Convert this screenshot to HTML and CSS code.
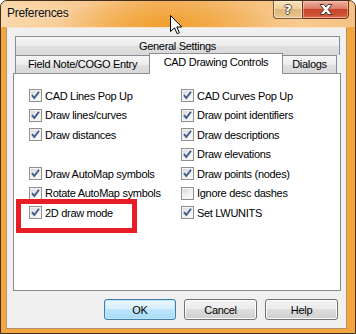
FILE: index.html
```html
<!DOCTYPE html>
<html>
<head>
<meta charset="utf-8">
<title>Preferences</title>
<link rel="stylesheet" href="styles.css">
</head>
<body>
<div class="window">
  <div class="titlebar">
    <span class="title">Preferences</span>
    <div class="caption-buttons">
      <div class="cap-btn help-btn"><span>?</span></div>
      <div class="cap-btn close-btn">
        <svg width="14" height="11" viewBox="0 0 14 11"><path d="M1 0.5 H5 L7 3 L9 0.5 H13 L9.2 5.5 L13 10.5 H9 L7 8 L5 10.5 H1 L4.8 5.5 Z" fill="#fff" stroke="#4a3b33" stroke-width="1"/></svg>
      </div>
    </div>
  </div>

  <div class="client">
    <div class="tabs">
      <div class="tab-row back">
        <div class="tab wide">General Settings</div>
      </div>
      <div class="tab-row front">
        <div class="tab field">Field Note/COGO Entry</div>
        <div class="tab cad selected">CAD Drawing Controls</div>
        <div class="tab dialogs">Dialogs</div>
      </div>
      <div class="panel">
        <div class="options">
          <div class="opt"><span class="box on"></span>CAD Lines Pop Up</div>
          <div class="opt"><span class="box on"></span>CAD Curves Pop Up</div>
          <div class="opt"><span class="box on"></span>Draw lines/curves</div>
          <div class="opt"><span class="box on"></span>Draw point identifiers</div>
          <div class="opt"><span class="box on"></span>Draw distances</div>
          <div class="opt"><span class="box on"></span>Draw descriptions</div>
          <div class="opt empty"></div>
          <div class="opt"><span class="box on"></span>Draw elevations</div>
          <div class="opt"><span class="box on"></span>Draw AutoMap symbols</div>
          <div class="opt"><span class="box on"></span>Draw points (nodes)</div>
          <div class="opt"><span class="box on"></span>Rotate AutoMap symbols</div>
          <div class="opt"><span class="box"></span>Ignore desc dashes</div>
          <div class="opt"><span class="box on"></span>2D draw mode</div>
          <div class="opt"><span class="box on"></span>Set LWUNITS</div>
        </div>
      </div>
    </div>

    <div class="buttons">
      <button class="btn default">OK</button>
      <button class="btn">Cancel</button>
      <button class="btn">Help</button>
    </div>
  </div>

  <!-- annotation box drawn over the dialog -->
  <div class="highlight"></div>

  <svg class="cursor" width="13" height="20" viewBox="0 0 13 20">
    <path d="M0.5 0.5 V16.5 L4.5 12.8 L7.2 18.8 L9.4 17.8 L6.8 12 H11.8 Z" fill="#fff" stroke="#000" stroke-width="1" stroke-linejoin="miter"/>
  </svg>
</div>
</body>
</html>
```

FILE: styles.css
```css
* {
  box-sizing: border-box;
}

html, body {
  margin: 0;
  padding: 0;
  background: #ffffff;
}

body {
  font-family: "Liberation Sans", Arial, sans-serif;
  font-size: 11px;
  letter-spacing: -0.3px;
  color: #000;
}

.window {
  position: relative;
  width: 356px;
  height: 334px;
  border: 1px solid #3f2f1c;
  border-radius: 7px 7px 0 0;
  background: #f3a63d;
  display: flex;
  flex-direction: column;
  overflow: hidden;
}

/* title bar */
.titlebar {
  height: 26px;
  flex: none;
  display: flex;
  justify-content: space-between;
  align-items: flex-start;
  padding-left: 6px;
  background:
    radial-gradient(ellipse 110px 30px at 165px 24px, rgba(240,158,44,0.95), rgba(240,158,44,0)),
    linear-gradient(to right, #f9d8ac 0%, #f7c98f 25%, #f4b565 45%, #f5bd76 65%, #f7ca90 85%, #f6c283 100%);
}

.title {
  padding-top: 5px;
  font-size: 12px;
  line-height: 15px;
  color: #111;
  text-shadow: 0 0 6px rgba(255,240,220,0.9);
}

.caption-buttons {
  display: flex;
  margin-right: 6px;
  margin-top: -1px;
}

.cap-btn {
  height: 19px;
  display: flex;
  align-items: center;
  justify-content: center;
}

.help-btn {
  width: 29px;
  border: 1px solid #7a5b36;
  border-right: none;
  border-radius: 0 0 0 4px;
  background: linear-gradient(#f8e2bd, #efcf9c 45%, #dfb67c 50%, #e9c58f);
  box-shadow: inset 0 0 0 1px rgba(255,245,225,0.6);
}

.help-btn span {
  font-family: "DejaVu Sans", sans-serif;
  font-weight: bold;
  font-size: 13px;
  letter-spacing: 0;
  color: #fff;
  line-height: 13px;
  text-shadow: 1px 0 0 #5a4a3a, -1px 0 0 #5a4a3a, 0 1px 0 #5a4a3a, 0 -1px 0 #5a4a3a;
}

.close-btn {
  width: 47px;
  border: 1px solid #74331f;
  border-radius: 0 0 4px 0;
  background: linear-gradient(#eeb0a1, #dc7e66 45%, #c8442a 50%, #d05436 85%, #e07b5e);
  box-shadow: inset 0 0 0 1px rgba(255,210,195,0.5);
}

/* client area */
.client {
  flex: 1;
  margin: 0 8px 4px 5px;
  border: 1px solid #b5936a;
  border-top-color: #fbe3c2;
  background: #f0f0f0;
  padding: 8px 4px 0 6px;
}

.tabs {
  width: 328px;
}

.tab-row {
  display: flex;
  align-items: flex-end;
  padding-left: 2px;
}

.tab-row.back {
  height: 19px;
  padding-right: 1px;
}

.tab-row.front {
  height: 18px;
}

.tab {
  border: 1px solid #898c95;
  border-bottom: none;
  background: linear-gradient(#f6f6f6, #ececec 50%, #e0e0e0 51%, #d8d8d8);
  text-align: center;
  white-space: nowrap;
}

.tab.wide {
  flex: 1;
  height: 19px;
  padding-top: 2px;
  line-height: 15px;
}

.tab.field,
.tab.dialogs {
  height: 18px;
  padding-top: 1px;
  line-height: 15px;
  border-right: none;
}

.tab.field {
  width: 134px;
}

.tab.dialogs {
  width: 54px;
  border-right: 1px solid #898c95;
  border-left: none;
}

.tab.selected {
  position: relative;
  z-index: 1;
  width: 134px;
  height: 21px;
  margin-bottom: -1px;
  padding-top: 1px;
  line-height: 15px;
  background: #fff;
}

.panel {
  height: 218px;
  border: 1px solid #898c95;
  background: #fff;
  padding: 12px 0 0 15px;
}

.options {
  display: grid;
  grid-template-columns: 152px 1fr;
  grid-auto-rows: 19.5px;
}

.opt {
  display: flex;
  align-items: center;
  gap: 3px;
  white-space: nowrap;
}

.box {
  width: 13px;
  height: 13px;
  flex: none;
  border: 1px solid #8e8f8f;
  background: linear-gradient(135deg, #d4d6d9, #f2f2f2 60%, #fbfbfb);
  box-shadow: inset 0 0 0 1px #f4f4f4;
}

.box.on {
  background:
    url("data:image/svg+xml;utf8,<svg xmlns='http://www.w3.org/2000/svg' width='11' height='11' viewBox='0 0 11 11'><polyline points='2,5.2 4.3,8 9,1.8' fill='none' stroke='%233e5b8e' stroke-width='1.9'/></svg>") center / 11px 11px no-repeat,
    linear-gradient(135deg, #d4d6d9, #f2f2f2 60%, #fbfbfb);
}

/* dialog buttons */
.buttons {
  display: flex;
  justify-content: flex-end;
  gap: 8px;
  margin-top: 8px;
  padding-right: 4px;
}

.btn {
  width: 73px;
  height: 21px;
  padding: 0;
  border: 1px solid #707070;
  border-radius: 3px;
  background: linear-gradient(#f2f2f2, #ebebeb 45%, #dddddd 50%, #cfcfcf);
  box-shadow: inset 0 0 0 1px #fcfcfc;
  font-family: "Liberation Sans", Arial, sans-serif;
  font-size: 11px;
  letter-spacing: -0.3px;
  color: #000;
}

.btn.default {
  width: 72px;
  border-color: #3c7fb1;
  background: linear-gradient(#eaf6fd, #d9f0fc 45%, #bee6fd 50%, #a7d9f5);
  box-shadow: inset 0 0 0 1px #c4e5f6;
}

/* overlays */
.highlight {
  position: absolute;
  left: 15px;
  top: 198px;
  width: 121px;
  height: 34px;
  border: 5px solid #e81d25;
}

.cursor {
  position: absolute;
  left: 169px;
  top: 14px;
}
```
